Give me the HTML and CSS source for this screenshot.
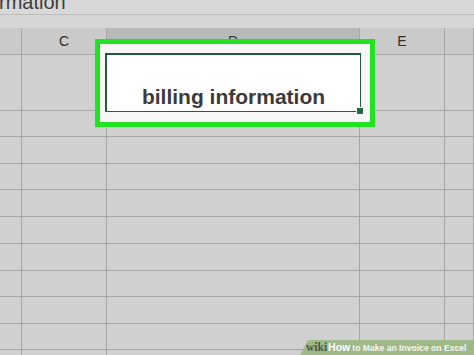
FILE: index.html
```html
<!DOCTYPE html>
<html>
<head>
<meta charset="utf-8">
<link rel="stylesheet" href="styles.css">
</head>
<body>
<div class="sheet">
  <div class="formula"><span class="ftext">rmation</span></div>
  <div class="band"></div>
  <div class="grid">
    <div class="cell head"></div>
    <div class="cell head">C</div>
    <div class="cell head sel">D</div>
    <div class="cell head">E</div>
    <div class="cell head"></div>

    <div class="cell"></div><div class="cell"></div>
    <div class="cell active"><span class="value">billing information</span><span class="handle"></span></div>
    <div class="cell"></div><div class="cell"></div>

    <div class="cell"></div><div class="cell"></div><div class="cell"></div><div class="cell"></div><div class="cell"></div>
    <div class="cell"></div><div class="cell"></div><div class="cell"></div><div class="cell"></div><div class="cell"></div>
    <div class="cell"></div><div class="cell"></div><div class="cell"></div><div class="cell"></div><div class="cell"></div>
    <div class="cell"></div><div class="cell"></div><div class="cell"></div><div class="cell"></div><div class="cell"></div>
    <div class="cell"></div><div class="cell"></div><div class="cell"></div><div class="cell"></div><div class="cell"></div>
    <div class="cell"></div><div class="cell"></div><div class="cell"></div><div class="cell"></div><div class="cell"></div>
    <div class="cell"></div><div class="cell"></div><div class="cell"></div><div class="cell"></div><div class="cell"></div>
    <div class="cell"></div><div class="cell"></div><div class="cell"></div><div class="cell"></div><div class="cell"></div>
    <div class="cell"></div><div class="cell"></div><div class="cell"></div><div class="cell"></div><div class="cell"></div>
    <div class="cell"></div><div class="cell"></div><div class="cell"></div><div class="cell"></div><div class="cell"></div>
  </div>
  <div class="ring"><div class="ring-gap"></div></div>
  <div class="badge"><span class="wiki">wiki</span><span class="how">How</span><span class="title">to Make an Invoice on Excel</span></div>
</div>
</body>
</html>
```

FILE: styles.css
```css
html, body {
  margin: 0;
  padding: 0;
  background: #d0d0d0;
  overflow: hidden;
}
.sheet {
  position: relative;
  width: 474px;
  height: 355px;
  overflow: hidden;
  font-family: "Liberation Sans", Arial, sans-serif;
  background: #d0d0d0;
}
.formula {
  height: 14px;
  background: #d8d8d8;
  border-bottom: 1px solid #bdbdbd;
  overflow: hidden;
}
.ftext {
  display: block;
  margin-top: -8px;
  margin-left: -1px;
  font-size: 20px;
  line-height: 20px;
  color: #3c3c3c;
  white-space: nowrap;
}
.band {
  height: 13px;
  background: #d6d6d6;
}
.grid {
  display: grid;
  grid-template-columns: 22px 85px 253px 85px 29px;
  grid-template-rows: 27px 56px 26px 27px 26px 27px 27px 27px 26px 27px 26px 27px;
}
.cell {
  box-sizing: border-box;
  border-right: 1px solid #a6a6a6;
  border-bottom: 1px solid #a6a6a6;
  background: #d0d0d0;
}
.head {
  background: #cacaca;
  color: #2e2e2e;
  font-size: 14px;
  line-height: 26px;
  text-align: center;
}
.head.sel {
  background: #b8b8b8;
}
.active {
  position: relative;
  background: #ffffff;
  border: none;
  outline: 2px solid #1e5e3a;
  display: flex;
  flex-direction: column;
  justify-content: flex-end;
  align-items: center;
  padding-bottom: 2px;
}
.value {
  font-size: 21px;
  font-weight: bold;
  color: #3b3b3b;
  white-space: nowrap;
}
.handle {
  position: absolute;
  z-index: 3;
  right: -4px;
  bottom: -4px;
  width: 8px;
  height: 8px;
  box-sizing: border-box;
  border: 1px solid #ffffff;
  background: #1e6a3f;
}
.ring {
  position: absolute;
  z-index: 2;
  left: 95px;
  top: 39px;
  width: 280px;
  height: 88px;
  box-sizing: border-box;
  border: 5px solid #22e322;
  pointer-events: none;
}
.ring-gap {
  box-sizing: border-box;
  width: 100%;
  height: 100%;
  border-style: solid;
  border-color: #f8f6f6;
  border-width: 9px 9px 10px 5px;
}
.badge {
  position: absolute;
  z-index: 4;
  right: 0;
  bottom: 0;
  width: 174px;
  height: 15px;
  box-sizing: border-box;
  padding-left: 6px;
  background: #9fb888;
  clip-path: polygon(8px 0, 100% 0, 100% 100%, 0 100%);
  display: flex;
  align-items: baseline;
  white-space: nowrap;
  line-height: 15px;
}
.wiki {
  font-family: "Liberation Serif", "Times New Roman", serif;
  font-weight: bold;
  font-size: 11.5px;
  color: #4a5a3e;
}
.how {
  font-weight: bold;
  font-size: 10.5px;
  color: #ffffff;
  margin-left: 1px;
}
.title {
  font-weight: bold;
  font-size: 8.6px;
  color: #f4f7f0;
  margin-left: 2px;
}
```
